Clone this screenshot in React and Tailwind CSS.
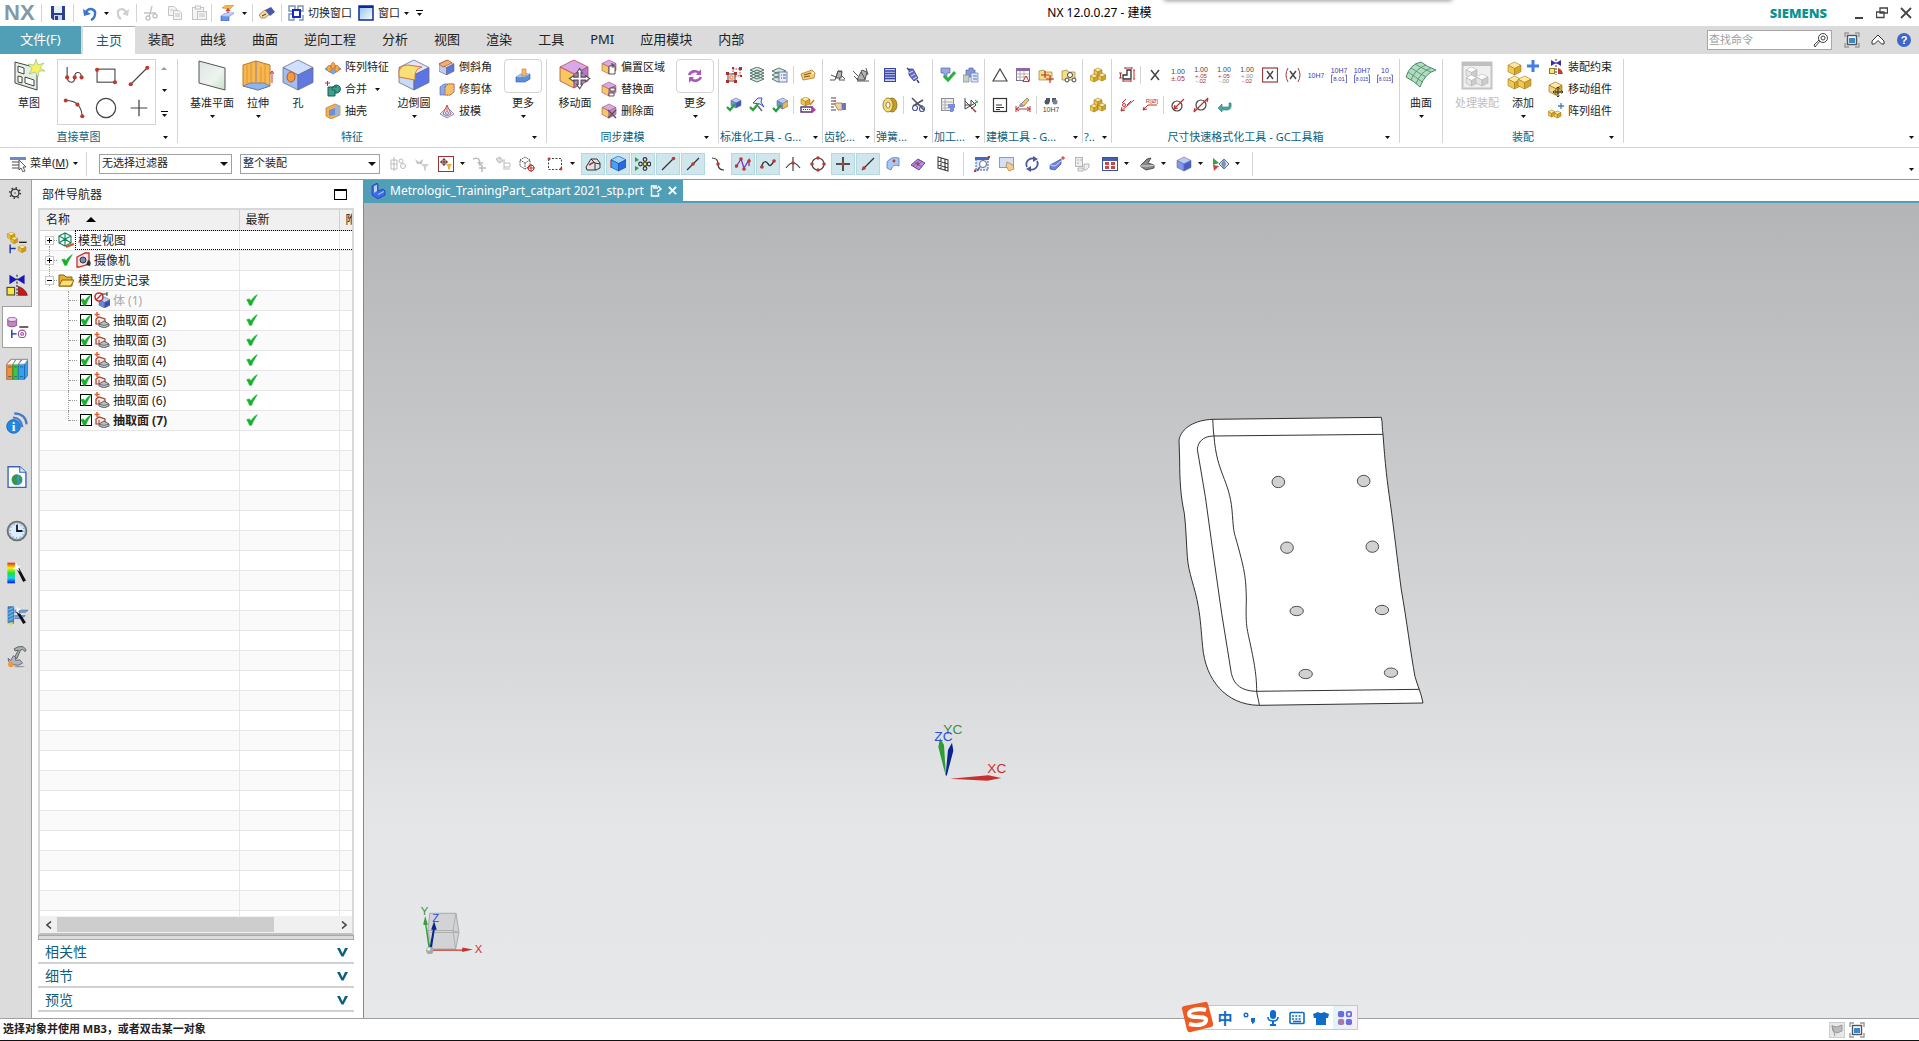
import React, { useState } from 'react';

// isometric cube, used by a lot of the icons
function Cube({ x = 0, y = 0, s = 16, top, left, right, line = '#6b6b8c' }) {
    const h = s / 2;
    const q = s / 4;
    return (
        <g stroke={line} strokeWidth={s > 20 ? 0.8 : 0.6} strokeLinejoin="round">
            <path d={`M${x + h} ${y}L${x + s} ${y + q}L${x + h} ${y + h}L${x} ${y + q}Z`} fill={top} />
            <path d={`M${x} ${y + q}L${x + h} ${y + h}V${y + s}L${x} ${y + s - q}Z`} fill={left} />
            <path d={`M${x + s} ${y + q}L${x + h} ${y + h}V${y + s}L${x + s} ${y + s - q}Z`} fill={right} />
        </g>
    );
}

function Dot({ x, y, r = 1.4 }) {
    return <circle cx={x} cy={y} r={r} fill="#c0392f" />;
}

function Tiny({ x = 8, y, fill = '#444', size = 6, children }) {
    return (
        <text x={x} y={y} fill={fill} fontSize={size} textAnchor="middle" fontFamily="Liberation Sans, sans-serif">
            {children}
        </text>
    );
}

const goldBlock = (
    <>
        <Cube x={4} y={1} s={8} top="#fbe9a4" left="#f0c74e" right="#d9a62c" line="#a37a1c" />
        <Cube x={0} y={7} s={8} top="#fbe9a4" left="#e8d44e" right="#d9a62c" line="#a37a1c" />
        <Cube x={8} y={6} s={8} top="#fbe9a4" left="#f0c74e" right="#d9a62c" line="#a37a1c" />
    </>
);

const tick = <path d="M1 8L5 7L7 10C9 6 12 3 16 1C13 6 10 10 8 16H5C4 13 3 11 1 8Z" fill="#12b32b" stroke="#12b32b" strokeWidth="0.8" />;

const violetCube = <Cube x={1} y={1} s={14} top="#d8a8e8" left="#f8c860" right="#c08ad8" line="#a0506c" />;

const cursorCross = <path d="M8 1L10 4H9V7H12V6L15 8L12 10V9H9V12H10L8 15L6 12H7V9H4V10L1 8L4 6V7H7V4H6Z" fill="#fff" stroke="#555" strokeWidth="0.8" />;

const folder = <path d="M1 4L6 3L7 5H14V13H1Z" fill="#f3dc8a" stroke="#a08430" strokeWidth="0.7" />;

// 16 x 16 drawings
const icons = {
    save: <><path d="M1 1H15V15H3L1 13Z" fill="#27408f" /><rect x="4" y="1" width="8" height="7" fill="#e6f0fa" /><rect x="4" y="10" width="8" height="5" fill="#cdd5e0" /><rect x="5" y="11" width="3" height="4" fill="#27408f" /></>,
    undo: <><path d="M4 7C7 2 14 4 13 9C13 12 11 14 9 15" fill="none" stroke="#3c78c8" strokeWidth="2.4" /><path d="M1 4L2 11L9 9Z" fill="#3c78c8" /></>,
    redo: <><path d="M12 7C9 2 3 4 4 9C4 12 5 13 7 14" fill="none" stroke="#cfcfcf" strokeWidth="2.2" /><path d="M15 4L14 11L8 9Z" fill="#cfcfcf" /></>,
    cut: <g fill="none" stroke="#c4c4c4" strokeWidth="1.4"><path d="M9 1L6 12M1 8L13 8" /><circle cx="5" cy="13" r="2" /><circle cx="12" cy="11" r="2" /></g>,
    copy: <g fill="#f4f4f4" stroke="#c4c4c4"><path d="M1.5 1.5H7L9.5 4V10.5H1.5Z" /><path d="M6.5 5.5H12L14.5 8V14.5H6.5Z" /><path d="M8 9H13M8 11H13M3 5H6" /></g>,
    paste: <g fill="#f4f4f4" stroke="#c4c4c4"><rect x="1.5" y="2.5" width="11" height="12" /><rect x="4.5" y="1" width="5" height="3" /><rect x="6.5" y="6.5" width="9" height="8" /><path d="M8 9H14M8 11H14" /></g>,
    touch: <><path d="M2 3L6 0H14L10 4Z" fill="#f8b848" stroke="#d48820" strokeWidth="0.6" /><path d="M8 3V9M6 6L8 4L10 6" stroke="#c44" fill="none" strokeWidth="1.2" /><path d="M1 11L6 8H14L9 11.5V16H1Z" fill="#6a94ec" stroke="#3858b0" strokeWidth="0.6" /><path d="M1 11L6 8H14L9 11.5Z" fill="#b8ccf8" /></>,
    handPen: <><path d="M0 10L6 5L11 9L6 13L2 13Z" fill="#f8d8a0" stroke="#8a6a30" strokeWidth="0.7" /><path d="M6 5L12 2L16 7L11 11Z" fill="#4858b0" /><path d="M3 11L7 9" stroke="#333" /></>,
    switchWin: <g fill="#fff" strokeWidth="1.4"><path d="M1 1H7V6H1ZM10 1H15V6H10ZM1 9H6V15H1Z" stroke="#7c93ad" /><path d="M11 15H15V10" stroke="#7c93ad" fill="none" /><rect x="5" y="5" width="7" height="7" stroke="#1628c8" strokeWidth="2" /></g>,
    win: <><defs><linearGradient id="winG" x1="0" y1="0" x2="1" y2="1"><stop offset="0" stopColor="#8cc0e8" /><stop offset="1" stopColor="#fff" /></linearGradient></defs><rect x="1" y="1" width="14" height="14" fill="url(#winG)" stroke="#10289c" strokeWidth="1.5" /><path d="M1 2H15" stroke="#10289c" strokeWidth="2" /></>,
    search: <g fill="none" stroke="#444"><circle cx="10" cy="6" r="4.5" /><circle cx="10" cy="6" r="2" /><path d="M7 9L2 15L1 13L6 8" /></g>,
    fit: <><path d="M1 5V1H5M11 1H15V5M15 11V15H11M5 15H1V11" fill="none" stroke="#999" strokeWidth="1.4" /><rect x="3.5" y="3.5" width="9" height="9" fill="#fff" stroke="#555" strokeWidth="1.4" /><rect x="5" y="6" width="6" height="5" fill="#3f86d0" /></>,
    up: <path d="M2 9L8 3L14 9V12H11.5L8 8.5L4.5 12H2Z" fill="#fff" stroke="#333" />,
    help: <><circle cx="8" cy="8" r="7" fill="#3c66c8" /><text x="8" y="12" fontSize="11" fontWeight="bold" fill="#fff" textAnchor="middle" fontFamily="Liberation Sans, sans-serif">?</text></>,

    pattern: <><path d="M0 10L8 5L16 10L8 15Z" fill="#7ca8e8" stroke="#4a68a8" strokeWidth="0.6" /><path d="M2 8L4 6L6 8V12L4 13L2 11ZM6 5L8 3L10 5V9L8 10L6 8ZM10 8L12 6L14 8V11L12 13L10 12Z" fill="#f8a848" stroke="#c06820" strokeWidth="0.6" /></>,
    unite: <><path d="M3 6H8A4 4 0 1 1 12 12H10V15H3Z" fill="#3aa08c" stroke="#1a5a50" /><path d="M7 9V6H12M10 12V9H7" fill="none" stroke="#1a5a50" strokeWidth="0.8" /><path d="M0 2H5M2.5 0V5" stroke="#c03030" /></>,
    shell: <><path d="M1 5L10 1L15 3V12L6 16L1 13Z" fill="#f4b050" stroke="#a06820" strokeWidth="0.6" /><path d="M4 7L10 5V12L4 13Z" fill="#6a90e0" /><path d="M10 5V1L15 3V12L10 12Z" fill="#90b4f0" opacity="0.8" /></>,
    chamfer: <><Cube x={0} y={1} s={15} top="#dfe9f8" left="#b8cdf0" right="#5a78d8" /><path d="M0 5L9 1L13 4L4 8Z" fill="#f8b060" stroke="#b03830" strokeWidth="0.6" /></>,
    trim: <><path d="M1 6L5 3H15V11L11 14H1Z" fill="#8aa8ec" stroke="#4a58a8" strokeWidth="0.6" /><path d="M6 6L9 3H15V11L11 14H6Z" fill="#f8c060" stroke="#b03830" strokeWidth="0.8" strokeDasharray="1.5 1" /></>,
    draft: <g fill="#e8e8f8" stroke="#6878b8" strokeWidth="0.8"><path d="M1 11L8 4L15 11L8 15Z" /><path d="M4 11L8 2L12 11L8 13ZM8 2V8" stroke="#c04040" /><circle cx="8" cy="10" r="1.5" /></g>,
    offset: <>{violetCube}<path d="M8 7H14V15H8Z" fill="#fff" stroke="#444" strokeWidth="0.9" /><path d="M10 5H12V9" fill="none" stroke="#444" /></>,
    replace: <>{violetCube}<path d="M9 7H14V10H9ZM8 12H13V15H8Z" fill="#fff" stroke="#444" strokeWidth="0.9" /></>,
    remove: <>{violetCube}<path d="M7 7L15 15M15 7L7 15" stroke="#555" strokeWidth="1.4" /></>,
    moreFeature: <><path d="M1 9L6 6H15V11L10 14H1Z" fill="#5a90e0" stroke="#3050a0" strokeWidth="0.6" /><path d="M1 9L6 6H15L10 9Z" fill="#a8c8f4" /><path d="M7 1H11V8H7Z" fill="#f8b868" stroke="#c07828" strokeWidth="0.6" /></>,
    moreSync: <g fill="none" stroke="#a858b8" strokeWidth="2.6"><path d="M2 7C4 3 9 2 12 5M14 9C12 13 7 14 4 11" /><path d="M14 1V7H9ZM2 15V9H7Z" fill="#a858b8" stroke="none" /></g>,

    stdBoxes: <><rect x="7" y="2" width="7" height="7" fill="#fff" stroke="#a83030" strokeDasharray="1.5 1" /><rect x="2" y="7" width="7" height="7" fill="#fff" stroke="#444" /><path d="M6 0H8V2H6ZM14 0H16V3H13V0ZM14 8H16V10H14ZM0 5H3V8H0ZM8 5H11V8H8ZM0 13H3V16H0ZM8 13H11V16H8Z" fill="#a83030" /><rect x="4" y="9" width="3" height="3" fill="none" stroke="#f07030" /></>,
    layers: <g fill="#d4e8dc" stroke="#4a6860" strokeWidth="0.9"><path d="M1 12L8 9L15 12L8 15ZM1 9L8 6L15 9L8 12ZM1 6L8 3L15 6L8 9ZM1 3L8 0L15 3L8 6Z" /></g>,
    layersDoc: <><g fill="#d4e8dc" stroke="#4a6860" strokeWidth="0.9"><path d="M0 12L6 9L12 12L6 15ZM0 8L6 5L12 8L6 11ZM0 4L7 1L14 4L7 7Z" /></g><rect x="7" y="5" width="8" height="10" fill="#e8eefc" stroke="#7080b8" /><path d="M9 8H10M11 8H14M9 11H10M11 11H14" stroke="#4858a8" /></>,
    tag: <><path d="M1 7L12 3L15 6L14 11L3 13Z" fill="#f8cc78" stroke="#a87828" strokeWidth="0.8" /><path d="M4 8L11 6M4 10L10 9" stroke="#7a5410" /><circle cx="13" cy="6" r="1" fill="#fff" /></>,
    blueCheck: <><Cube x={5} y={1} s={10} top="#b8d0f8" left="#6a94e8" right="#3858c0" /><path d="M1 10L4 13L9 7" fill="none" stroke="#28a040" strokeWidth="2.4" /></>,
    toolCheck: <><path d="M4 6L9 1H13L12 5L15 10L11 7Z" fill="#e8eefc" stroke="#4848c0" /><path d="M1 10L4 13L9 7" fill="none" stroke="#28a040" strokeWidth="2.4" /><path d="M9 9L13 14" stroke="#667" strokeWidth="1.5" /></>,
    goldCheck: <><Cube x={5} y={1} s={11} top="#b8d0f8" left="#6a94e8" right="#f0b840" /><path d="M1 11L4 14L9 8" fill="none" stroke="#28a040" strokeWidth="2.4" /></>,
    cubePen: <><Cube x={1} y={0} s={9} top="#fbe9a4" left="#f0c74e" right="#d9a62c" line="#a37a1c" /><path d="M1 10H12V15H1Z" fill="#fff" stroke="#503880" strokeWidth="1.4" /><path d="M3 12.5H10" stroke="#503880" strokeDasharray="1 1" /><path d="M12 9L16 13L12 16Z" fill="#b040a0" /><path d="M10 8L14 3" stroke="#d88020" strokeWidth="1.6" /></>,
    gear1: <g fill="#b0b4b8" stroke="#444" strokeWidth="0.9"><path d="M0 13H5L8 4H12L9 13H15" fill="none" /><path d="M6 11L8 4L12 5L11 11Z" /><path d="M1 8L6 10M11 8L15 12" /></g>,
    gear2: <g fill="#b0b4b8" stroke="#444" strokeWidth="0.9"><path d="M4 13L9 3L14 5L12 13Z" /><path d="M0 4L5 9M1 9L5 13M8 5L12 12M13 1L15 8M4 14H16" /></g>,
    gearHand: <><path d="M1 1H6M1 4H4M1 7H5M1 10H4M1 13H6" stroke="#444" strokeWidth="1.2" /><path d="M4 4L6 4" stroke="#c03030" strokeWidth="1.5" /><path d="M5 6H12V13H8L5 8Z" fill="#f4cfa4" stroke="#90683c" strokeWidth="0.7" /><rect x="12" y="6" width="4" height="7" fill="#6878c0" /></>,
    spring: <g fill="#c8d0f4" stroke="#3844a0"><rect x="2.5" y="1.5" width="11" height="13" /><path d="M2 4H14M2 6.5H14M2 9H14M2 11.5H14" strokeWidth="1.4" /></g>,
    spring2: <><path d="M4 2L8 2L13 11L9 14L4 8Z" fill="#6470c8" stroke="#303c90" strokeWidth="0.8" /><path d="M4 6L8 4M6 9L10 7M8 12L12 10" stroke="#dde" /><path d="M2 1L4 3M12 13L14 16" stroke="#303c90" strokeWidth="1.5" /></>,
    disc: <><ellipse cx="10" cy="8" rx="5" ry="7" fill="#c89c28" stroke="#7a5c10" strokeWidth="0.7" /><ellipse cx="6" cy="8" rx="5" ry="7" fill="#f4dc78" stroke="#7a5c10" strokeWidth="0.7" /><ellipse cx="6" cy="8" rx="2" ry="3" fill="#fff" stroke="#7a5c10" strokeWidth="0.7" /></>,
    springCut: <g fill="none" stroke="#4c5c98" strokeWidth="1.2"><path d="M2 1L14 13M13 3L3 9" stroke="#555" strokeWidth="1.6" /><circle cx="5" cy="11" r="2.5" /><circle cx="12" cy="12" r="2.5" /><path d="M6 7L13 9" /></g>,
    machCheck: <><path d="M1 1H10V6H7V10H4V6H1Z" fill="#98a8e0" stroke="#5464a8" strokeWidth="0.7" /><path d="M4 9L8 13L15 5" fill="none" stroke="#28b040" strokeWidth="3" /></>,
    machDoc: <><path d="M3 3H6V1H10V3H12V10H3Z" fill="#8898d8" stroke="#5464a8" strokeWidth="0.7" /><path d="M0 8H6V15H0Z" fill="#c8d0c8" stroke="#788" strokeWidth="0.7" /><path d="M8 6H15V15H8Z" fill="#dce4fc" stroke="#6878b8" strokeWidth="0.7" /><path d="M10 9H14M10 12H14" stroke="#6878b8" /></>,
    machTable: <><rect x="1.5" y="1.5" width="12" height="12" fill="#f4f4dc" stroke="#889" /><path d="M1 5H14M1 8H14M1 11H14M5 1V14" stroke="#aab" /><path d="M8 7H15V11H13V15H10V11H8Z" fill="#7c8cd8" /></>,
    axes: <g fill="none" stroke="#444"><path d="M2 1V12L14 5M2 4L11 13M2 8H8V3L13 8L8 12" /><path d="M12 3L15 5L12 6" stroke="#28a040" /><path d="M10 12L13 15" stroke="#c03030" strokeWidth="1.5" /></g>,
    triangle: <path d="M8 2L15 14H1Z" fill="none" stroke="#444" strokeWidth="1.2" />,
    table: <><rect x="1.5" y="1.5" width="13" height="12" fill="#fff" stroke="#846c98" /><rect x="1" y="1" width="14" height="3" fill="#8c68a8" /><path d="M1 7H14M1 10H14M5 4V14M9 4V14" stroke="#998" strokeWidth="0.7" /><path d="M11 9L14 14.5H8Z" fill="#fff" stroke="#c03030" /></>,
    folderPlus: <>{folder}<path d="M7 4V11M3 8H11M12 8V16M8 12H16" stroke="#c03030" strokeWidth="1.2" /></>,
    folderGear: <>{folder}<g fill="#fff" stroke="#444"><circle cx="9" cy="8" r="2.5" /><circle cx="6" cy="13" r="2" /><circle cx="13" cy="13" r="2" /></g></>,
    note: <><rect x="1.5" y="1.5" width="13" height="13" fill="#fff" stroke="#333" strokeWidth="1.2" /><path d="M4 8H10M4 10.5H12M4 12.5H8" stroke="#333" /></>,
    brushDim: <><path d="M6 7L12 1L14 3L9 9Z" fill="#f4c858" stroke="#667" strokeWidth="0.7" /><path d="M5 6L9 10L4 10Z" fill="#8898b8" /><path d="M1 9V15M15 9V15M1 12H15M4 10L1 12L4 14M12 10L15 12L12 14" fill="none" stroke="#c03030" /></>,
    binoc: <><path d="M3 1H7V5H3ZM9 1H13V5H9Z" fill="#505868" /><circle cx="4" cy="5" r="2.5" fill="#505868" /><circle cx="12" cy="5" r="2.5" fill="#788098" /><Tiny y={15} size={7}>10H7</Tiny></>,
    blocks: goldBlock,
    dimBox: <><path d="M8 3H12V12H4V8H8Z" fill="none" stroke="#333" strokeWidth="1.3" /><path d="M0 6H3M0 11H3M1.5 6V11M6 0V2M13 0V2M6 1H13M4 14H12M4 13V15M12 13V15M15 3V12M14 3H16M14 12H16" stroke="#c03030" /></>,
    x: <path d="M4 3L12 13M12 3L4 13" stroke="#444" strokeWidth="1.5" />,
    tolA: <><Tiny y={7} size={7}>1.00</Tiny><Tiny y={14} fill="#b03030" size={7}>±.05</Tiny></>,
    tolB: <><Tiny y={5} size={7}>1.00</Tiny><Tiny y={11} fill="#b03030">+.05</Tiny><Tiny y={16} fill="#b03030">-.02</Tiny></>,
    tolC: <><Tiny y={5} size={7}>1.00</Tiny><Tiny y={11} fill="#b03030">+.05</Tiny><Tiny y={16} fill="#888">-.00</Tiny></>,
    tolD: <><Tiny y={5} size={7}>1.00</Tiny><Tiny y={11} fill="#888">+.00</Tiny><Tiny y={16} fill="#b03030">-.02</Tiny></>,
    boxX: <><rect x="0.5" y="1" width="15" height="14" fill="none" stroke="#a03838" strokeWidth="1.2" /><path d="M5 4L11 12M11 4L5 12" stroke="#444" strokeWidth="1.4" /></>,
    parX: <><path d="M3 1Q-1 8 3 15M13 1Q17 8 13 15" fill="none" stroke="#a03838" /><path d="M5 4L11 12M11 4L5 12" stroke="#444" strokeWidth="1.4" /></>,
    h7: <Tiny y={11} fill="#3838b0" size={7}>10H7</Tiny>,
    h7a: <><Tiny y={6} fill="#3838b0" size={7}>10H7</Tiny><path d="M2 8H0.500V16H2M14 8H15.500V16H14" fill="none" stroke="#3838b0" strokeWidth="0.7" /><Tiny y={14} fill="#3838b0">8.01</Tiny></>,
    h7b: <><Tiny y={6} fill="#3838b0" size={7}>10H7</Tiny><path d="M2 8H0.500V16H2M14 8H15.500V16H14" fill="none" stroke="#3838b0" strokeWidth="0.7" /><Tiny y={14} fill="#3838b0" size={5}>8.015</Tiny></>,
    h7c: <><Tiny y={6} fill="#3838b0" size={7}>10</Tiny><path d="M2 8H0.500V16H2M14 8H15.500V16H14" fill="none" stroke="#3838b0" strokeWidth="0.7" /><Tiny y={14} fill="#3838b0" size={5}>8.015</Tiny></>,
    leader: <><path d="M2 14L15 3M2 14L3 10M2 14L6 13M3 6L7 2M8 8L12 4" stroke="#c03030" fill="none" /><circle cx="5" cy="8" r="1.5" fill="none" stroke="#c03030" /></>,
    leaderR: <><path d="M1 13L6 8H15M1 13L2 10M1 13L5 12" stroke="#c03030" fill="none" /><Tiny x={10} y={6} fill="#c03030">R[Ø]</Tiny></>,
    dia1: <><circle cx="7" cy="9" r="5" fill="none" stroke="#444" strokeWidth="1.2" /><path d="M4 12L14 2M4 12L5 8M4 12L8 11" stroke="#c03030" strokeWidth="1.2" fill="none" /></>,
    dia2: <><circle cx="8" cy="8" r="5" fill="none" stroke="#444" strokeWidth="1.2" /><path d="M1 15L15 1M1 15L2 11M15 1L14 5" stroke="#c03030" strokeWidth="1.2" fill="none" /></>,
    enter: <path d="M13 6V10H6V7L2 11L6 15V13H12Q16 12 15 6Z" fill="#48a8a8" stroke="#287878" strokeWidth="0.6" />,
    constraint: <><path d="M3 1V7L8 4ZM13 1V7L8 4Z" fill="#3830a8" /><path d="M8 0V16" stroke="#333" strokeDasharray="2 1" /><rect x="1.5" y="9.5" width="5" height="5" fill="#f8e870" stroke="#8a7a20" /><path d="M10 9V15H15Q14 10 10 9Z" fill="#c83838" /></>,
    moveComp: <><Cube x={1} y={1} s={13} top="#fbe9a4" left="#f4d478" right="#d9a62c" line="#8a661c" /><path d="M10 6V16M5 11H15M8.5 7.5L10 6L11.5 7.5M8.5 14.5L10 16L11.5 14.5M6.5 9.5L5 11L6.5 12.5M13.5 9.5L15 11L13.5 12.5" fill="none" stroke="#333" /></>,
    patternComp: <><Cube x={0} y={7} s={7} top="#fbe9a4" left="#f4c04e" right="#d9a62c" line="#a37a1c" /><Cube x={6} y={8} s={7} top="#fbe9a4" left="#f4c04e" right="#d9a62c" line="#a37a1c" /><path d="M13 0V6M10 3H16" stroke="#4878d0" strokeWidth="1.3" /></>,

    menu: <><path d="M0 1H16V4H0Z" fill="#6c88c8" /><path d="M2 6H10M2 9H9M2 12H10" stroke="#888" strokeWidth="1.4" /><path d="M9 4V14L11 12L13 16L15 15L13 11H16Z" fill="#fff" stroke="#333" strokeWidth="0.8" /></>,
    grayMove: <g fill="none" stroke="#bbb"><path d="M1 4H7V13H1ZM4 1V15M1 8H7" /><circle cx="11" cy="5" r="2" /><circle cx="13" cy="10" r="2.5" /></g>,
    grayFilter: <><path d="M1 3L5 6L9 3L8 8H3Z" fill="#c4c4c4" /><path d="M7 8H15L12 11V15L10 14V11Z" fill="#d0d0d0" /></>,
    snapBox: <><rect x="0.5" y="0.5" width="15" height="15" fill="#fff" stroke="#a03038" /><circle cx="6" cy="6" r="2.5" fill="none" stroke="#a03038" /><path d="M6 2V10M2 6H10" stroke="#333" /><path d="M8 8H14L12 11V14L10 13V11Z" fill="#f0b038" /></>,
    grayA: <g fill="none" stroke="#bbb" strokeWidth="1.5"><path d="M2 3Q9 0 9 8M7 6L9 9L12 6" /><path d="M11 9V16M8 12H15" /></g>,
    grayB: <g fill="#ddd" stroke="#bbb"><path d="M1 3L5 1L8 5L4 7Z" /><path d="M9 3V14M9 7H15V11H9M10 13H15" fill="none" /></g>,
    cubeTarget: <><path d="M1 4L6 1L11 4V10L6 13L1 10ZM1 4L6 7L11 4M6 7V13" fill="none" stroke="#444" strokeDasharray="1.5 1" /><circle cx="12" cy="12" r="3" fill="none" stroke="#c03030" /><path d="M12 8V16M8 12H16" stroke="#c03030" /></>,
    marquee: <><rect x="1.5" y="2.5" width="13" height="11" fill="none" stroke="#444" strokeDasharray="2 1.5" /><Dot x={2} y={3} /><Dot x={14} y={13} /></>,
    hlShape: <><path d="M1 11L6 3H12L15 7V12L11 14L2 14Z" fill="#dde3ea" stroke="#333" /><path d="M6 3L10 7V14M10 7L15 8" fill="none" stroke="#333" /><path d="M4 9L9 6" stroke="#c03030" strokeWidth="1.5" /></>,
    hlCube: <><Cube x={1} y={0} s={15} top="#9cd4fc" left="#48a0f4" right="#2868e0" line="#1848a0" /><path d="M1 4V12" stroke="#c04040" /></>,
    hlGear: <><path d="M0 1L4 4L0 6ZM0 10L4 12L0 15Z" fill="#28a040" /><circle cx="10" cy="8" r="2" fill="#f4e030" stroke="#333" /><g fill="none" stroke="#333" strokeWidth="1.2"><circle cx="10" cy="3.500" r="1.8" /><circle cx="10" cy="12.500" r="1.8" /><circle cx="5.500" cy="8" r="1.8" /><circle cx="14" cy="8" r="1.8" /></g></>,
    endpoint: <><path d="M2 14L14 2" stroke="#333" strokeWidth="1.2" /><Dot x={13.5} y={2.5} r={1.8} /></>,
    midpoint: <><path d="M2 14L14 2" stroke="#333" strokeWidth="1.2" /><Dot x={8} y={8} r={1.8} /></>,
    ctrl: <><path d="M2 2Q8 2 8 8Q8 14 14 14" fill="none" stroke="#333" strokeWidth="1.2" /><Dot x={8} y={8} r={1.8} /></>,
    poles: <><path d="M1 11L6 3L9 12L14 4V10" fill="none" stroke="#7838b8" strokeWidth="1.3" /><Dot x={1.5} y={10} r={1.8} /><Dot x={6} y={3} r={1.8} /><Dot x={9} y={13} r={1.8} /><Dot x={14} y={5} r={1.8} /></>,
    spline: <><path d="M1 12C4 2 7 6 9 9C11 11 13 6 15 4" fill="none" stroke="#333" strokeWidth="1.4" /><Dot x={2} y={11} r={1.8} /><Dot x={14} y={5} r={1.8} /></>,
    cross: <><path d="M8 1V15M1 12Q8 2 15 12" fill="none" stroke="#444" strokeWidth="1.2" /><Dot x={8} y={7} r={1.8} /></>,
    center: <><circle cx="8" cy="8" r="6" fill="none" stroke="#444" strokeWidth="1.2" /><Dot x={8} y={2} r={1.8} /><Dot x={8} y={14} r={1.8} /><Dot x={2} y={8} r={1.8} /><Dot x={14} y={8} r={1.8} /></>,
    point: <><path d="M8 1V15M1 8H15" stroke="#222" strokeWidth="1.5" /><Dot x={8} y={8} r={1.8} /></>,
    onCurve: <><path d="M2 14L14 2" stroke="#333" strokeWidth="1.2" /><Dot x={4} y={12} r={1.8} /></>,
    face: <><path d="M2 6Q6 0 14 2V10Q8 7 6 14L2 12Z" fill="#a8c8f4" stroke="#5878b8" strokeWidth="0.8" /><Dot x={9} y={5} /></>,
    mesh: <><path d="M1 9L8 3L15 7L9 14Z" fill="#b090e0" stroke="#6a4898" /><path d="M4 6L12 11M5 12L12 5M3 10L10 4" stroke="#6a4898" strokeWidth="0.7" /><Dot x={8} y={8} /></>,
    grid: <g fill="none" stroke="#444" strokeWidth="1.1"><path d="M3 1L13 4V15L3 12ZM3 5L13 8M3 9L13 12M6 2V13M10 3V14" /></g>,
    zoomFit: <><rect x="2" y="2" width="12" height="12" fill="#dde8fa" stroke="#3858b8" strokeDasharray="2 1" /><path d="M1 1H15V4H1Z" fill="#4868c0" /><circle cx="9" cy="8" r="3.5" fill="#fff" stroke="#667" /><path d="M6 11L3 15" stroke="#667" strokeWidth="1.6" /><Dot x={15} y={1} /><Dot x={1} y={15} /></>,
    pan: <><rect x="0.5" y="1.5" width="14" height="10" fill="#d4e0f4" stroke="#8c9cc0" /><path d="M8 6L14 9L15 13L10 15L7 10Z" fill="#f4cc90" stroke="#a88040" strokeWidth="0.7" /></>,
    rotate: <g fill="none" stroke="#485c98" strokeWidth="1.8"><path d="M3 11A6 6 0 0 1 11 3M13 5A6 6 0 0 1 5 13" /><path d="M9 0L14 3L9 6ZM7 10V16L2 13Z" fill="#485c98" stroke="none" /></g>,
    persp: <><path d="M1 9L5 7L12 3V8L6 14L1 13Z" fill="#6c84d8" stroke="#3c50a0" strokeWidth="0.7" /><path d="M1 9L6 10L12 5" fill="none" stroke="#c8d4f8" /><path d="M14 0V4M12 2H16" stroke="#c03030" /></>,
    grayDoc: <g fill="#eee" stroke="#b4b4b4"><rect x="1.5" y="1.5" width="7" height="9" /><path d="M3 4H5M3 7H5M6 4H8" /><path d="M4 12H9V15H4ZM10 8H15V11L12 14H10Z" /></g>,
    layout: <><rect x="0.5" y="1.5" width="15" height="13" fill="#fff" stroke="#3850a8" /><path d="M1 2H15V5H1Z" fill="#4060b8" /><path d="M3 6H7V9H3ZM9 6H13V9H9ZM3 10H7V13H3ZM9 10H13V13H9Z" fill="#c84848" /></>,
    shade: <><path d="M1 10L8 3L12 2L9 7L15 9V12L7 14Z" fill="#888" stroke="#444" strokeWidth="0.9" /><path d="M1 10L10 10L15 9" fill="none" stroke="#ddd" /></>,
    blueCube: <Cube x={1} y={1} s={14} top="#b8ccf8" left="#7c98ec" right="#4460c8" />,
    clip: <><path d="M0 2L6 7L0 9Z" fill="#38a048" /><path d="M0 9L6 10L1 15Z" fill="#d04040" /><path d="M6 8L11 3L16 8L11 13Z" fill="#dde6f0" stroke="#667" /><path d="M11 3L13 8L11 13L8 8Z" fill="#7890c0" /></>,

    views: <><path d="M1 4L7 1L13 4V11L7 14L1 11ZM1 4L7 7L13 4M7 1V14M1 11L7 7L13 11" fill="none" stroke="#18885c" strokeWidth="1.2" /><path d="M8 15L16 12" stroke="#e05028" strokeWidth="2" /></>,
    camera: <><path d="M1 5L9 1H13V12L3 15H1Z" fill="#fce4e0" stroke="#c03030" strokeWidth="1.3" /><circle cx="7" cy="8" r="3" fill="#7888c8" stroke="#333" /><path d="M12 8Q16 9 14 14L10 13Z" fill="#333" /></>,
    openFolder: <><path d="M1 3H6L8 5H14V14H1Z" fill="#e8b030" stroke="#8a6008" /><path d="M4 8H16L13 14H1Z" fill="#fce070" stroke="#8a6008" /></>,
    body: <><Cube x={5} y={5} s={11} top="#b8ccf8" left="#5c88e8" right="#3050c0" /><circle cx="5" cy="5" r="4" fill="#fff" stroke="#c83030" strokeWidth="1.6" /><path d="M2 8L8 2" stroke="#c83030" strokeWidth="1.4" /><path d="M8 2H13M13 0V4" stroke="#333" /></>,
    extract: <><path d="M3 0V5M0.500 2.500H5.500" stroke="#e06030" fill="none" strokeWidth="1.4" /><path d="M2 7L5 5L11 7V12H2Z" fill="#fbe6e0" stroke="#a04030" strokeWidth="1.2" /><path d="M5 8V12" stroke="#a04030" /><path d="M5 12L10 9L15 12V14L10 16L5 14Z" fill="#b8c0c8" stroke="#555" strokeWidth="0.9" /><path d="M5 12L10 13.500L15 12" fill="none" stroke="#555" strokeWidth="0.7" /></>,
    flag: <g><rect x="0.5" y="0.5" width="15" height="15" fill="#e8e8e8" stroke="#ccc" /><path d="M3 4L8 5L13 3V9L8 11L4 9ZM3 3L6 14" fill="#bbb" stroke="#999" /></g>,
    part: <><path d="M2 3L7 0L8 2V8L13 6L15 8V12L8 16L2 12Z" fill="#3a6cf0" stroke="#1838a0" strokeWidth="0.7" /><path d="M4 3L7 2V8L4 10Z" fill="#b8d4fc" /><path d="M8 11L14 8V9L8 12Z" fill="#b8d4fc" /></>,
};

// 32 x 32 drawings
const bigIcons = {
    sketch: <><path d="M2 3L24 9V31L2 24Z" fill="#e4f0e4" stroke="#444" /><path d="M5 7L11 9V15L5 13ZM5 17L9 18V24L5 23ZM12 18L21 21V27L12 24Z" fill="#fff" stroke="#444" /><path d="M23 0L25 6L31 4L27 9L32 12L26 12L25 18L22 13L16 15L19 10L15 5L21 6Z" fill="#f8f060" stroke="#7cb8a0" strokeWidth="0.6" /></>,
    datum: <path d="M3 2L29 9V31L3 24Z" fill="url(#datumG)" stroke="#555" />,
    extrude: <><path d="M1 6L14 2L28 6V27L16 31L1 27Z" fill="#f8b850" stroke="#c07828" /><path d="M5 6V26M9 4V24M19 8V27M23 5V26" stroke="#e09430" /><path d="M14 2V23M1 27L8 24H22L28 27L16 31Z" fill="#8cb4f0" stroke="#5870b0" strokeWidth="0.7" /><path d="M30 24V12M28 15L30 12L32 15" fill="none" stroke="#c83030" /></>,
    hole: <><Cube x={1} y={1} s={30} top="#cfe0fa" left="#a4bcf4" right="#6078e0" /><ellipse cx="9" cy="18" rx="4" ry="5" fill="#f89838" stroke="#b05818" /></>,
    blend: <><Cube x={1} y={1} s={30} top="#dce8fc" left="#c8dcf8" right="#5c74e4" /><path d="M1 18V12Q3 6 10 6L24 8Q17 10 17 17V21Z" fill="#f8e078" stroke="#e07030" /></>,
    moveFace: <><Cube x={1} y={1} s={28} top="#d8a8e8" left="#f8c85c" right="#b478d0" line="#b04858" /><g transform="translate(9 8) scale(1.45)">{cursorCross}</g></>,
    surface: <><path d="M1 18Q5 5 16 3Q22 8 31 11Q20 14 15 28Q9 22 1 18Z" fill="#b0dcc0" stroke="#4c8868" /><path d="M6 9Q14 14 21 18M10 5Q18 10 26 13M3 13Q11 18 17 23M6 21Q10 10 21 6M11 25Q15 13 26 9" fill="none" stroke="#4c8868" strokeWidth="0.8" /></>,
    process: <><rect x="1.5" y="3.5" width="29" height="26" fill="#f0f0f0" stroke="#c4c4c4" strokeWidth="2" /><path d="M1 3H31V7H1Z" fill="#c0c0c0" /><Cube x={5} y={8} s={11} top="#fff" left="#e4e4e4" right="#ccc" line="#b4b4b4" /><Cube x={5} y={16} s={11} top="#fff" left="#e4e4e4" right="#ccc" line="#b4b4b4" /><Cube x={15} y={15} s={12} top="#fff" left="#e4e4e4" right="#ccc" line="#b4b4b4" /></>,
    add: <><Cube x={1} y={3} s={13} top="#fbe9a4" left="#f4c850" right="#d9a62c" line="#a37a1c" /><Cube x={1} y={17} s={13} top="#fbe9a4" left="#f4c850" right="#d9a62c" line="#a37a1c" /><Cube x={11} y={17} s={13} top="#fbe9a4" left="#f4c850" right="#d9a62c" line="#a37a1c" /><path d="M26 1V13M20 7H32" stroke="#4080e0" strokeWidth="3" /></>,

    // gallery
    profile: <><path d="M6 3V16Q6 25 12 25Q17 25 17 18Q17 11 22 11Q27 11 27 20" fill="none" stroke="#444" strokeWidth="1.6" /><Dot x={6} y={18} r={3} /><Dot x={17} y={18} r={3} /><Dot x={27} y={18} r={3} /></>,
    rect: <><rect x="3" y="6" width="26" height="19" fill="none" stroke="#444" strokeWidth="1.6" /><Dot x={3} y={7} r={3} /><Dot x={29} y={25} r={3} /></>,
    line: <><path d="M4 28L28 4" stroke="#444" strokeWidth="1.6" /><Dot x={4} y={28} r={3} /><Dot x={28} y={4} r={3} /></>,
    arc: <><path d="M5 5Q26 5 28 28" fill="none" stroke="#444" strokeWidth="1.6" /><Dot x={4} y={5} r={3} /><Dot x={21} y={11} r={3} /><Dot x={28} y={28} r={3} /></>,
    circle: <circle cx="16" cy="16" r="14" fill="none" stroke="#444" strokeWidth="1.8" />,
    plus: <path d="M16 4V28M4 16H28" stroke="#444" strokeWidth="1.8" />,

    // resource bar
    gear: <g fill="none" stroke="#333"><circle cx="16" cy="16" r="9" strokeWidth="3" /><circle cx="16" cy="16" r="12" strokeWidth="4" strokeDasharray="3 6.4" /><circle cx="16" cy="16" r="1" fill="#333" /></g>,
    assembly: <><Cube x={2} y={0} s={11} top="#fce888" left="#f0c020" right="#d89c10" line="#a07810" /><Cube x={7} y={7} s={10} top="#fce888" left="#f0c020" right="#d89c10" line="#a07810" /><Cube x={18} y={19} s={11} top="#fce888" left="#f0c020" right="#d89c10" line="#a07810" /><path d="M19 15H30" stroke="#222" strokeWidth="2" /><path d="M6 18V31M6 24H14" fill="none" stroke="#1830a0" strokeWidth="2" /></>,
    constraints: <><path d="M5 1V15L16 8ZM27 1V15L16 8Z" fill="#1818b8" /><path d="M16 1V32" stroke="#222" strokeWidth="1.6" strokeDasharray="3 2" /><rect x="1.5" y="19.5" width="11" height="11" fill="#f8e838" stroke="#444" strokeWidth="1.6" /><path d="M18 18V31H31Q29 22 18 18Z" fill="#c81818" stroke="#601010" /></>,
    navigator: <><path d="M1 5V14Q7 18 14 14V5Z" fill="#c088c0" stroke="#783878" /><ellipse cx="7.5" cy="5" rx="6.5" ry="3" fill="#f0d0f0" stroke="#783878" /><path d="M18 16H31" stroke="#222" strokeWidth="2" /><path d="M7 20V32M7 26H14" fill="none" stroke="#1830a0" strokeWidth="2" /><circle cx="22" cy="26" r="5.5" fill="#fff" stroke="#a048a0" strokeWidth="1.6" /><circle cx="22" cy="26" r="2" fill="none" stroke="#a048a0" strokeWidth="1.6" /></>,
    books: <><path d="M1 9L7 2H13L10 9V31H1Z" fill="#f09030" stroke="#905010" /><path d="M10 9L14 2H21L18 9V31H10Z" fill="#38c848" stroke="#187828" /><path d="M18 9L23 2H32V25L27 31H18Z" fill="#38a0f0" stroke="#1868a8" /><path d="M1 9L8 2H14L10 9M10 9L15 2H22L18 9M18 9L24 2H32L27 9Z" fill="#fff" stroke="#888" /><path d="M27 9V31M3 13H8M3 27H8M12 13H16M12 27H16M20 13H25M20 27H25" stroke="#1a508c" /></>,
    info: <><g fill="none" stroke="#4878c8" strokeWidth="3"><path d="M10 8Q22 8 24 22M12 2Q29 3 30 18" /></g><circle cx="11" cy="21" r="10" fill="#2088e0" stroke="#1050a0" /><text x="11" y="28" fontSize="19" fontWeight="bold" fill="#fff" textAnchor="middle" fontFamily="Liberation Serif, serif">i</text></>,
    globeDoc: <><path d="M3 1H20L29 9V31H3Z" fill="#fff" stroke="#3868b0" strokeWidth="2" /><path d="M20 1V9H29" fill="#dce8f8" stroke="#3868b0" strokeWidth="1.6" /><circle cx="16" cy="20" r="8" fill="#3898c8" /><path d="M9 17Q12 11 17 13L15 19L18 23L14 28Q8 25 9 17ZM20 14Q25 18 22 25L19 20Z" fill="#389838" /></>,
    clock: <><circle cx="16" cy="16" r="15" fill="#687078" /><circle cx="16" cy="16" r="12" fill="#dcecfc" stroke="#aab4c0" /><path d="M16 7V16H24" fill="none" stroke="#101828" strokeWidth="2.6" /><circle cx="16" cy="16" r="10" fill="none" stroke="#334" strokeWidth="1.4" strokeDasharray="1 4.24" /></>,
    rainbow: <><rect x="2" y="1" width="11" height="30" fill="url(#rainbowG)" /><path d="M15 9L18 7L29 27L25 29Z" fill="#111" /><path d="M15 1L17 6L22 5L18 9L20 14L15 10L10 11L13 7Z" fill="#fff" /></>,
    wand: <><path d="M3 4H11V28H3Z" fill="#3c8cd0" stroke="#205c98" /><path d="M3 9L11 5M3 14L11 10M3 19L11 15M3 24L11 20" stroke="#a8d4f8" /><path d="M12 9H32L28 12H12M12 17H28L22 21H12" fill="#7cacdc" stroke="#3468a8" /><path d="M15 12L18 10L29 27L25 29Z" fill="#111" /><path d="M16 2L17 7L22 7L18 10L20 15L15 11Z" fill="#fff" /><path d="M1 28L11 26L8 31Z" fill="#e8d848" /></>,
    hammer: <><path d="M12 4L18 1H25L29 5L28 8L24 5L21 6L16 18L12 17L18 6L13 7Z" fill="#a8b4ac" stroke="#333" /><path d="M3 18L7 21L11 14L14 17L14 21L20 20L24 25L18 28L8 27L4 23Z" fill="#b0b4c4" stroke="#445" /><circle cx="7" cy="27" r="4" fill="#f09838" /><path d="M12 29H28L24 31H14Z" fill="#999" /></>,
};

function Icon({ name }) {
    return <svg viewBox="0 0 16 16" className="size-4 shrink-0" aria-hidden="true">{icons[name]}</svg>;
}

function BigIcon({ name, className = 'size-8' }) {
    return <svg viewBox="0 0 32 32" className={`shrink-0 ${className}`} aria-hidden="true">{bigIcons[name]}</svg>;
}

function Caret({ className = 'w-[5px] h-[3px]' }) {
    return (
        <svg viewBox="0 0 6 3" preserveAspectRatio="none" className={`shrink-0 ${className}`} aria-hidden="true">
            <path d="M0 0H6L3 3Z" fill="#111" />
        </svg>
    );
}

function CaretButton({ label = '更多选项', className = 'w-4 h-4' }) {
    return (
        <button type="button" aria-label={label} className={`flex shrink-0 items-center justify-center ${className}`}>
            <Caret />
        </button>
    );
}

function Sep({ className = 'h-[18px]' }) {
    return <div className={`w-px shrink-0 bg-[#d4d4d4] ${className}`} />;
}

function TitleBar() {
    const btn = 'flex h-6 w-6 shrink-0 items-center justify-center';
    return (
        <header className="relative flex h-[26px] shrink-0 items-center bg-white text-[11px] text-[#222]">
            <span className="w-[41px] pl-1 font-['Liberation_Sans',sans-serif] text-[22px] leading-6 font-bold text-[#8299a8]">NX</span>
            <Sep />
            <button type="button" aria-label="保存" className="flex h-6 w-[31px] items-center justify-center"><Icon name="save" /></button>
            <Sep />
            <button type="button" aria-label="撤销" className="flex h-6 w-6 items-center justify-end"><Icon name="undo" /></button>
            <CaretButton />
            <button type="button" aria-label="重做" className="flex h-6 w-[22px] items-center justify-start"><Icon name="redo" /></button>
            <Sep />
            <div className="w-0.5" />
            <button type="button" aria-label="剪切" className={btn}><Icon name="cut" /></button>
            <button type="button" aria-label="复制" className={btn}><Icon name="copy" /></button>
            <button type="button" aria-label="粘贴" className={btn}><Icon name="paste" /></button>
            <Sep />
            <button type="button" aria-label="触控" className="flex h-6 w-6 items-center justify-end"><Icon name="touch" /></button>
            <CaretButton />
            <Sep />
            <button type="button" aria-label="重复命令" className="flex h-6 w-7 items-center justify-center"><Icon name="handPen" /></button>
            <Sep />
            <button type="button" className="flex h-6 items-center gap-1 pl-1.5"><Icon name="switchWin" />切换窗口</button>
            <button type="button" className="flex h-6 items-center gap-1 pl-1.5"><Icon name="win" />窗口<Caret /></button>
            <button type="button" aria-label="自定义" className="flex h-6 w-5 flex-col items-center justify-center gap-0.5">
                <span className="h-px w-[7px] bg-black" />
                <Caret />
            </button>
            <h1 className="flex-1 text-center text-[12px] text-black">NX 12.0.0.27 - 建模</h1>
            <div className="absolute -top-2 left-[1165px] h-2 w-[286px] bg-white shadow-[0_0_4px_1px_#999]" />
            <span className="pr-5 font-['Open_Sans',sans-serif] text-[13px] leading-6 font-extrabold text-[#0a9393]">SIEMENS</span>
            <button type="button" aria-label="最小化" className="flex h-5 w-[23px] items-end justify-center pb-1"><span className="h-0.5 w-2 bg-[#444]" /></button>
            <button type="button" aria-label="还原" className="flex h-6 w-6 items-center justify-center">
                <svg viewBox="0 0 12 12" className="size-3" fill="#fff" stroke="#444"><path d="M4 1H11.5V6H4ZM0.5 5H8V10.5H0.5Z" strokeWidth="1.3" /></svg>
            </button>
            <button type="button" aria-label="关闭" className="mr-px flex h-6 w-6 items-center justify-center">
                <svg viewBox="0 0 12 12" className="size-3" stroke="#444" strokeWidth="1.8"><path d="M1 1L11 11M11 1L1 11" /></svg>
            </button>
        </header>
    );
}

const tabs = ['主页', '装配', '曲线', '曲面', '逆向工程', '分析', '视图', '渲染', '工具', 'PMI', '应用模块', '内部'];

function TabBar() {
    const [active, setActive] = useState('主页');
    return (
        <nav className="flex h-7 shrink-0 items-stretch bg-[#dbdbdb] text-[13px] text-[#222]">
            <button type="button" className="mr-[2px] w-[81px] bg-[#519fb7] text-white">文件(F)</button>
            {tabs.map((tab) => (
                <button
                    key={tab}
                    type="button"
                    onClick={() => setActive(tab)}
                    className={`px-[13px] ${tab === active ? 'border-t border-[#a8a8a8] bg-white text-[#0e5f7e]' : ''}`}
                >
                    {tab}
                </button>
            ))}
            <div className="ml-auto flex items-center pr-0.5">
                <div className="flex h-5 w-[125px] items-center border border-[#a8a8a8] bg-white pr-0.5">
                    <input type="text" aria-label="查找命令" placeholder="查找命令" className="min-w-0 flex-1 pl-px text-[11px] outline-none placeholder:text-[#a0a0a0]" />
                    <Icon name="search" />
                </div>
                <button type="button" aria-label="全屏" className="ml-[7px] flex h-6 w-[26px] items-center justify-center"><Icon name="fit" /></button>
                <button type="button" aria-label="最小化功能区" className="flex h-6 w-[26px] items-center justify-center"><Icon name="up" /></button>
                <button type="button" aria-label="帮助" className="flex h-6 w-[26px] items-center justify-center"><Icon name="help" /></button>
            </div>
        </nav>
    );
}

function Group({ label, width, left = false, children }) {
    return (
        <section className={`flex h-[84px] shrink-0 flex-col border-r border-[#d4d4d4] ${width}`}>
            <div className="flex h-[70px] shrink-0 items-start">{children}</div>
            {label !== undefined && (
                <div className={`flex h-4 shrink-0 items-center text-[11px] leading-4 text-[#0e5f7e] ${left ? 'pr-px' : 'pr-1'}`}>
                    <span className={`min-w-0 flex-1 whitespace-nowrap ${left ? 'pl-px' : 'text-center'}`}>{label}</span>
                    <CaretButton label={`${label} 选项`} className={left ? 'h-4 w-3' : 'h-4 w-4'} />
                </div>
            )}
        </section>
    );
}

function BigButton({ icon, label, width = 'w-11', caret = false, disabled = false }) {
    return (
        <button type="button" disabled={disabled} className={`flex shrink-0 flex-col items-center ${width} ${disabled ? 'text-[#bdbdbd]' : 'text-[#222]'}`}>
            <BigIcon name={icon} />
            <span className="mt-1 text-[11px] leading-4 whitespace-nowrap">{label}</span>
            {caret && <span className="mt-1"><Caret /></span>}
        </button>
    );
}

function MoreButton({ icon }) {
    return (
        <button type="button" className="mr-1 ml-auto flex w-[38px] flex-col items-center text-[11px] text-[#222]">
            <span className="flex h-[34px] w-full items-center justify-center rounded border border-[#d4d4d4]"><Icon name={icon} /></span>
            <span className="mt-0.5 leading-4">更多</span>
            <span className="mt-1"><Caret /></span>
        </button>
    );
}

function SmallList({ items, className = '' }) {
    return (
        <div className={`flex shrink-0 flex-col ${className}`}>
            {items.map(([icon, label, caret]) => (
                <button key={label} type="button" className="flex h-[22px] items-start gap-1 text-[11px] leading-4 whitespace-nowrap text-[#222]">
                    <Icon name={icon} />
                    {label}
                    {caret && <span className="flex h-4 items-center pl-1"><Caret /></span>}
                </button>
            ))}
        </div>
    );
}

// rows of 16px tools, '|' is a separator
function MiniRows({ rows }) {
    return (
        <div className="flex flex-col gap-[6px] pt-1 pl-[3px]">
            {rows.map((row, i) => (
                <div key={i} className="flex h-6 items-center">
                    {row.map((name, j) => name === '|' ? (
                        <Sep key={j} className="mx-0.5 h-[18px]" />
                    ) : (
                        <button key={j} type="button" aria-label={name} className="flex h-6 w-[23px] shrink-0 items-center justify-center">
                            <Icon name={name} />
                        </button>
                    ))}
                </div>
            ))}
        </div>
    );
}

function Ribbon() {
    return (
        <div className="flex h-[94px] shrink-0 items-start overflow-hidden border-b border-[#d4d4d4] bg-white pt-[5px]">
            <Group label="直接草图" width="w-[178px]">
                <BigButton icon="sketch" label="草图" width="ml-1 w-[50px]" />
                <div className="ml-[3px] grid h-[66px] w-[99px] grid-cols-3 grid-rows-2 place-items-center border border-[#d4d4d4]">
                    {['profile', 'rect', 'line', 'arc', 'circle', 'plus'].map((name) => (
                        <button key={name} type="button" aria-label={name}><BigIcon name={name} className="size-[22px]" /></button>
                    ))}
                </div>
                <div className="flex h-[66px] w-4 flex-col items-center justify-between py-2">
                    <button type="button" aria-label="上一行" className="opacity-40"><svg viewBox="0 0 6 3" className="h-[3px] w-1.5"><path d="M0 3H6L3 0Z" /></svg></button>
                    <CaretButton className="h-2 w-4" label="下一行" />
                    <button type="button" aria-label="展开" className="flex flex-col items-center gap-0.5"><span className="h-px w-[7px] bg-black" /><Caret /></button>
                </div>
            </Group>
            <Group label="特征" width="w-[369px]">
                <BigButton icon="datum" label="基准平面" width="ml-2 w-[52px]" caret />
                <BigButton icon="extrude" label="拉伸" width="w-10" caret />
                <BigButton icon="hole" label="孔" width="w-10" />
                <SmallList className="ml-[7px]" items={[['pattern', '阵列特征'], ['unite', '合并', true], ['shell', '抽壳']]} />
                <BigButton icon="blend" label="边倒圆" width="ml-2 w-[34px]" caret />
                <SmallList className="ml-2" items={[['chamfer', '倒斜角'], ['trim', '修剪体'], ['draft', '拔模']]} />
                <MoreButton icon="moreFeature" />
            </Group>
            <Group label="同步建模" width="w-[172px]">
                <BigButton icon="moveFace" label="移动面" width="ml-2 w-10" />
                <SmallList className="ml-[6px]" items={[['offset', '偏置区域'], ['replace', '替换面'], ['remove', '删除面']]} />
                <MoreButton icon="moreSync" />
            </Group>
            <Group label="标准化工具 - G..." width="w-[104px]" left>
                <MiniRows rows={[['stdBoxes', 'layers', 'layersDoc', '|', 'tag'], ['blueCheck', 'toolCheck', 'goldCheck', '|', 'cubePen']]} />
            </Group>
            <Group label="齿轮..." width="w-[52px]" left>
                <MiniRows rows={[['gear1', 'gear2'], ['gearHand']]} />
            </Group>
            <Group label="弹簧..." width="w-[58px]" left>
                <MiniRows rows={[['spring', 'spring2'], ['disc', '|', 'springCut']]} />
            </Group>
            <Group label="加工..." width="w-[52px]" left>
                <MiniRows rows={[['machCheck', 'machDoc'], ['machTable', 'axes']]} />
            </Group>
            <Group label="建模工具 - G..." width="w-[98px]" left>
                <MiniRows rows={[['triangle', 'table', 'folderPlus', 'folderGear'], ['note', 'brushDim', '|', 'binoc']]} />
            </Group>
            <Group label="?.." width="w-[29px]" left>
                <MiniRows rows={[['blocks'], ['blocks']]} />
            </Group>
            <Group label="尺寸快速格式化工具 - GC工具箱" width="w-[288px]">
                <MiniRows
                    rows={[
                        ['dimBox', '|', 'x', 'tolA', 'tolB', 'tolC', 'tolD', 'boxX', 'parX', 'h7', 'h7a', 'h7b', 'h7c'],
                        ['leader', 'leaderR', '|', 'dia1', 'dia2', 'enter'],
                    ]}
                />
            </Group>
            <Group width="w-[43px]">
                <BigButton icon="surface" label="曲面" width="w-[42px]" caret />
            </Group>
            <Group label="装配" width="w-[181px]">
                <BigButton icon="process" label="处理装配" width="ml-2 w-[52px]" disabled />
                <BigButton icon="add" label="添加" width="w-10" caret />
                <SmallList className="ml-[5px]" items={[['constraint', '装配约束'], ['moveComp', '移动组件'], ['patternComp', '阵列组件']]} />
            </Group>
            <div className="ml-auto flex h-[86px] items-end"><CaretButton label="功能区选项" /></div>
        </div>
    );
}

function Filter({ label, options, width }) {
    return (
        <div className={`relative h-5 shrink-0 ${width}`}>
            <select aria-label={label} className="h-5 w-full appearance-none border border-[#a0a0a0] bg-white pl-0.5 text-[11px] text-[#222] outline-none">
                {options.map((o) => <option key={o}>{o}</option>)}
            </select>
            <span className="pointer-events-none absolute inset-y-0 right-1 flex items-center"><Caret className="h-1 w-2" /></span>
        </div>
    );
}

// '*' marks a snap option that is switched on
const snapTools = ['hlShape*', 'hlCube*', 'hlGear*', 'endpoint*', 'midpoint*', 'ctrl', 'poles*', 'spline*', 'cross', 'center', 'point*', 'onCurve*', 'face', 'mesh', 'grid'];

function SelectionBar() {
    const tool = (name) => (
        <button key={name} type="button" aria-label={name} className="flex h-[22px] w-6 shrink-0 items-center justify-center"><Icon name={name} /></button>
    );
    return (
        <div className="flex h-8 shrink-0 items-center border-b border-[#8a9a98] bg-white pl-2 text-[11px] text-[#222]">
            <button type="button" className="flex h-6 w-[78px] items-center gap-1 pl-0.5">
                <Icon name="menu" />
                <span>菜单(<u>M</u>)</span>
                <Caret />
            </button>
            <Sep className="mr-3 h-6" />
            <Filter label="选择过滤器" options={['无选择过滤器', '面', '边', '体']} width="w-[133px]" />
            <div className="w-2" />
            <Filter label="选择范围" options={['整个装配', '仅在工作部件内']} width="w-[140px]" />
            <div className="w-1.5" />
            {['grayMove', 'grayFilter', 'snapBox'].map(tool)}
            <CaretButton className="mr-px h-4 w-2" />
            {['grayA', 'grayB', 'cubeTarget'].map(tool)}
            <div className="ml-1 flex">{tool('marquee')}</div>
            <CaretButton className="mr-1 h-4 w-2.5" />
            <div className="flex gap-px">
                {snapTools.map((item) => {
                    const on = item.endsWith('*');
                    const name = item.replace('*', '');
                    return (
                        <button
                            key={name}
                            type="button"
                            aria-label={name}
                            aria-pressed={on}
                            className={`flex h-[22px] w-6 items-center justify-center ${on ? 'border border-[#b4d8e0] bg-[#cfe6ec]' : ''}`}
                        >
                            <Icon name={name} />
                        </button>
                    );
                })}
            </div>
            <Sep className="mr-[6px] ml-2 h-6" />
            <div className="flex gap-px">{['zoomFit', 'pan', 'rotate', 'persp', 'grayDoc'].map(tool)}</div>
            {['layout', 'shade', 'blueCube', 'clip'].map((name) => (
                <div key={name} className="flex items-center pl-1">
                    {tool(name)}
                    <CaretButton className="h-4 w-[9px]" />
                </div>
            ))}
            <Sep className="ml-2.5 h-6" />
            <div className="ml-auto flex h-7 items-end"><CaretButton label="选择条选项" /></div>
        </div>
    );
}

const resources = [
    ['assembly', '装配导航器', 'mt-4'],
    ['constraints', '约束导航器', ''],
    ['navigator', '部件导航器', ''],
    ['books', '重用库', ''],
    ['info', 'HD3D 工具', 'mt-3'],
    ['globeDoc', 'Web 浏览器', 'mt-3'],
    ['clock', '历史记录', 'mt-3'],
    ['rainbow', '可视化', ''],
    ['wand', '加工向导', ''],
    ['hammer', '角色', ''],
];

function ResourceBar() {
    const [open, setOpen] = useState('navigator');
    return (
        <aside className="flex w-8 shrink-0 flex-col bg-[#dcdcdc] shadow-[inset_-1px_0_0_#a0a0a0]">
            <button type="button" aria-label="资源条选项" className="flex h-[26px] w-[30px] items-center justify-center"><BigIcon name="gear" className="size-[14px]" /></button>
            {resources.map(([name, label, gap]) => (
                <button
                    key={name}
                    type="button"
                    aria-label={label}
                    onClick={() => setOpen(name)}
                    className={`ml-0.5 flex h-[42px] items-center justify-center ${gap} ${name === open ? 'border border-r-0 border-[#a0a0a0] bg-white' : ''}`}
                >
                    <BigIcon name={name} className="size-[22px]" />
                </button>
            ))}
        </aside>
    );
}

function Expander({ open }) {
    return (
        <span className="relative z-10 flex size-[9px] shrink-0 items-center justify-center border border-[#c8c8c8] bg-white">
            <svg viewBox="0 0 5 5" className="size-[5px]" stroke="#000"><path d={open ? 'M0 2.5H5' : 'M0 2.5H5M2.5 0V5'} /></svg>
        </span>
    );
}

function Tick() {
    return <svg viewBox="0 0 17 17" className="size-3 shrink-0" aria-hidden="true">{tick}</svg>;
}

const features = [
    { id: 1, name: '体 (1)', icon: 'body', dim: true },
    { id: 2, name: '抽取面 (2)', icon: 'extract' },
    { id: 3, name: '抽取面 (3)', icon: 'extract' },
    { id: 4, name: '抽取面 (4)', icon: 'extract' },
    { id: 5, name: '抽取面 (5)', icon: 'extract' },
    { id: 6, name: '抽取面 (6)', icon: 'extract' },
    { id: 7, name: '抽取面 (7)', icon: 'extract', bold: true },
];

function FeatureRow({ feature, shown, onToggle }) {
    const last = feature.id === features.length;
    return (
        <label className="flex h-[19px] items-center pl-7">
            <span className={`w-px self-start border-l border-dotted border-[#999] ${last ? 'h-[10px]' : 'h-5'}`} />
            <span className="mr-[3px] w-2 border-t border-dotted border-[#999]" />
            <span className="relative mr-0.5 size-3 shrink-0">
                <input type="checkbox" checked={shown} onChange={onToggle} className="block size-3 appearance-none border border-black bg-white" />
                {shown && <span className="pointer-events-none absolute inset-0"><Tick /></span>}
            </span>
            <Icon name={feature.icon} />
            <span className={`pl-[3px] ${feature.dim ? 'text-[#a8a8a8]' : ''} ${feature.bold ? 'font-bold' : ''}`}>{feature.name}</span>
        </label>
    );
}

function Navigator() {
    const [shown, setShown] = useState(features.map((f) => f.id));
    const toggle = (id) => setShown(shown.includes(id) ? shown.filter((s) => s !== id) : [...shown, id]);

    const rows = [
        <div className="flex h-[19px] items-center pl-[5px]">
            <Expander />
            <span className="mr-px w-[3px] border-t border-dotted border-[#999]" />
            <Icon name="views" />
            <span className="pl-[4px]">模型视图</span>
        </div>,
        <div className="flex h-[19px] items-center pl-[5px]">
            <Expander />
            <span className="mr-1 w-[3px] border-t border-dotted border-[#999]" />
            <Tick />
            <span className="pl-[3px]"><Icon name="camera" /></span>
            <span className="pl-[2px]">摄像机</span>
        </div>,
        <div className="flex h-[19px] items-center pl-[5px]">
            <Expander open />
            <span className="mr-px w-[3px] border-t border-dotted border-[#999]" />
            <Icon name="openFolder" />
            <span className="pl-[4px]">模型历史记录</span>
        </div>,
        ...features.map((f) => <FeatureRow feature={f} shown={shown.includes(f.id)} onToggle={() => toggle(f.id)} />),
    ];

    return (
        <aside className="flex w-[332px] shrink-0 flex-col border-r border-[#888] bg-white pr-[9px] pl-[6px]">
            <div className="flex h-7 shrink-0 items-center justify-between pt-px pr-[7px] pl-1 text-[12px] text-[#222]">
                <h2>部件导航器</h2>
                <button type="button" aria-label="最大化" className="h-[11px] w-[13px] border border-t-2 border-black" />
            </div>
            <div className="flex min-h-0 flex-1 flex-col border-2 border-[#d8d8d8] border-b-[#c0c0c0]">
                <div className="relative min-h-0 flex-1 overflow-hidden">
                    <table className="w-full table-fixed border-collapse text-[12px] leading-[19px] text-[#222]">
                        <colgroup>
                            <col className="w-[199px]" />
                            <col className="w-[100px]" />
                            <col />
                        </colgroup>
                        <thead>
                            <tr className="h-5 border-b border-[#d0d0d0] bg-[#f0f0f0] text-left">
                                <th className="border-r border-[#d0d0d0] py-0 pl-1.5 font-normal">
                                    <span className="flex items-center gap-4">名称<svg viewBox="0 0 10 5" className="h-[5px] w-2.5"><path d="M0 5H10L5 0Z" /></svg></span>
                                </th>
                                <th className="border-r border-[#d0d0d0] py-0 pl-1.5 font-normal">最新</th>
                                <th className="overflow-hidden py-0 pl-1.5 font-normal whitespace-nowrap">附注</th>
                            </tr>
                        </thead>
                        <tbody>
                            {Array.from({ length: 60 }, (_, i) => (
                                <tr key={i} className="h-5 border-b border-[#e6e6e6] even:bg-[#fafafa]">
                                    <td className="border-r border-[#e6e6e6] p-0">{rows[i]}</td>
                                    <td className="border-r border-[#e6e6e6] py-0 pl-1.5">{i > 2 && i < rows.length && <Tick />}</td>
                                    <td className="p-0" />
                                </tr>
                            ))}
                        </tbody>
                    </table>
                    {/* focus rectangle of the current row */}
                    <div className="pointer-events-none absolute top-5 right-0 left-[35px] h-5 border border-r-0 border-dotted border-black" />
                    {/* branch line between the root expanders */}
                    <div className="pointer-events-none absolute top-9 left-[9px] h-10 border-l border-dotted border-[#999]" />
                </div>
                <div className="flex h-[17px] shrink-0 items-center bg-[#f0f0f0]">
                    <button type="button" aria-label="向左滚动" className="flex h-4 w-[17px] items-center justify-center"><svg viewBox="0 0 6 8" className="h-2 w-1.5" fill="none" stroke="#444" strokeWidth="1.6"><path d="M5 0.5L1 4L5 7.5" /></svg></button>
                    <div className="flex-1"><div className="h-[15px] w-[78%] bg-[#cdcdcd]" /></div>
                    <button type="button" aria-label="向右滚动" className="flex h-4 w-[17px] items-center justify-center"><svg viewBox="0 0 6 8" className="h-2 w-1.5" fill="none" stroke="#444" strokeWidth="1.6"><path d="M1 0.5L5 4L1 7.5" /></svg></button>
                </div>
            </div>
            <div className="h-[5px] shrink-0 border border-[#a8a8a8] bg-[#dcdcdc]" />
            <div className="mb-1.5 shrink-0">
                {['相关性', '细节', '预览'].map((name) => (
                    <button key={name} type="button" className="flex h-6 w-full items-center justify-between border-b-2 border-[#d0d0d0] pt-0.5 pr-1.5 pl-[7px] text-[14px] leading-5 text-[#0e5f7e]">
                        {name}
                        <svg viewBox="0 0 11 9" className="h-[9px] w-[11px]" fill="#0e5f7e"><path d="M0 0H3L5.5 5.5L8 0H11L6.5 8.5H4.5Z" /></svg>
                    </button>
                ))}
            </div>
        </aside>
    );
}

// top row first: centre and radii of each drilled hole
const holes = [
    [415, 246, 19, 17], [671, 243, 19, 17],
    [441, 443, 19, 17], [697, 440, 19, 17],
    [470, 633, 20, 14], [726, 630, 20, 14],
    [497, 822, 20, 14], [753, 818, 20, 14],
];

function Part() {
    return (
        <svg viewBox="0 0 900 960" className="absolute top-[197px] left-[776px] h-[320px] w-[300px]" fill="none" stroke="#222" strokeWidth="2.8" strokeLinejoin="round">
            <path fill="#fff" d="M218 58L724 52C728 70 726 88 729 103C735 190 742 250 751 310C762 390 772 480 784 570C800 660 812 760 825 830C832 856 844 880 849 909L356 916C256 914 196 838 188 740C183 690 182 660 175 620C165 560 145 520 142 470C139 430 138 380 133 340C122 290 119 240 119 180L117 120C124 84 164 60 218 58Z" />
            <path d="M218 58C220 76 219 92 222 108C230 220 268 240 276 330C280 380 280 390 286 410C314 510 318 530 319 600C317 670 320 680 326 710C344 790 350 830 350 874C352 890 356 900 358 916" />
            <path d="M729 103L218 108C188 110 174 126 172 148L196 290L218 450L245 640L274 820C282 856 306 872 346 874L838 868" />
            {holes.map(([cx, cy, rx, ry]) => (
                <ellipse key={`${cx}-${cy}`} cx={cx} cy={cy} rx={rx} ry={ry} fill="#d0d1d3" stroke="#444" />
            ))}
        </svg>
    );
}

function Wcs() {
    return (
        <svg viewBox="90 60 240 195" className="absolute top-[517px] left-[566px] h-[65px] w-20 font-['Liberation_Sans',sans-serif]" fontSize="41">
            <path d="M120 114L132 135L138 228L130 200L115 140Z" fill="#2f9c38" />
            <path d="M156 128L160 152L140 228L137 224L144 150Z" fill="#0a2490" />
            <path d="M150 236L265 226L304 234L262 242Z" fill="#c83030" />
            <text x="130" y="103" fill="#3a9040">YC</text>
            <text x="103" y="122" fill="#2850d8">ZC</text>
            <text x="262" y="220" fill="#c83030">XC</text>
        </svg>
    );
}

function ViewTriad() {
    return (
        <svg viewBox="1250 75 210 160" className="absolute bottom-[60px] left-[53px] h-[53px] w-[70px] font-['Liberation_Sans',sans-serif]" fontSize="34">
            <path d="M1288 100H1367L1376 158L1366 208H1296L1282 152Z" fill="#d2d3d5" stroke="#a0a0a4" strokeWidth="2.5" />
            <path d="M1282 152H1358L1376 158H1290M1367 100L1358 152L1366 208" fill="none" stroke="#a8a8ac" strokeWidth="2.5" />
            <path d="M1274 108L1282 134L1278 136L1290 205L1284 206L1274 136L1268 134Z" fill="#38a040" />
            <path d="M1301 124L1309 150L1303 150L1294 206H1287L1297 150L1292 149Z" fill="#0a2490" />
            <path d="M1296 209H1386V203L1418 209L1386 217V213H1296Z" fill="#c83030" />
            <circle cx="1288" cy="212" r="11" fill="#a8a8a8" />
            <circle cx="1285" cy="208" r="5" fill="#eee" />
            <text x="1261" y="106" fill="#3a9040">Y</text>
            <text x="1295" y="125" fill="#2850d8">Z</text>
            <text x="1424" y="220" fill="#c83030">X</text>
        </svg>
    );
}

function Viewport() {
    return (
        <main className="flex min-w-0 flex-1 flex-col">
            <div className="flex h-[23px] shrink-0 border-b-2 border-[#519fb7] bg-white">
                <div className="flex items-center bg-[#519fb7] px-1.5 text-[12px] text-white">
                    <Icon name="part" />
                    <span className="pl-1">Metrologic_TrainingPart_catpart 2021_stp.prt</span>
                    <svg viewBox="0 0 12 12" className="ml-1.5 size-3" fill="none" stroke="#fff" strokeWidth="1.5"><path d="M7 1H1.5V11H8.5V8M4 1V3H8M7 7L11 4L8 1" /></svg>
                    <button type="button" aria-label="关闭选项卡" className="ml-1.5"><svg viewBox="0 0 10 10" className="size-[9px]" stroke="#fff" strokeWidth="2.2"><path d="M1 1L9 9M9 1L1 9" /></svg></button>
                </div>
            </div>
            <div className="relative min-h-0 flex-1 overflow-hidden bg-linear-to-b from-[#b4b5b7] via-[#e4e5e7] via-75% to-[#e7e8ea]">
                <Part />
                <Wcs />
                <ViewTriad />
            </div>
        </main>
    );
}

function ImeBar() {
    const btn = 'flex h-6 w-6 items-center justify-center';
    return (
        <div className="absolute right-[561px] bottom-[11px] flex h-[25px] items-center border border-[#b8cce0] bg-white pl-5">
            <svg viewBox="0 0 32 32" className="absolute -top-[5px] -left-[12px] size-8">
                <path d="M1 8Q0 6 3 5L24 1Q26 0 27 3L32 22Q33 25 30 26L10 31Q7 32 6 29Z" fill="#ee5a24" />
                <path d="M25 9C17 7 8 9 8 13C8 18 25 14 25 19C25 24 16 25 8 23" fill="none" stroke="#fff" strokeWidth="4.2" />
            </svg>
            <button type="button" className="flex h-6 w-6 items-center justify-center text-[15px] leading-5 font-bold text-[#0f6cc8]">中</button>
            <button type="button" aria-label="标点" className={btn}><svg viewBox="0 0 16 16" className="size-4" fill="#0f6cc8"><circle cx="5" cy="5" r="1.8" fill="none" stroke="#0f6cc8" strokeWidth="1.4" /><path d="M10 8H14V10Q14 13 11 14V12H10Z" /></svg></button>
            <button type="button" aria-label="语音" className={btn}><svg viewBox="0 0 16 16" className="size-4" fill="#0f6cc8"><rect x="5" y="0" width="6" height="9" rx="3" /><path d="M3 7Q3 11 8 11Q13 11 13 7" fill="none" stroke="#0f6cc8" strokeWidth="1.6" /><path d="M7 11H9V14H11V16H5V14H7Z" /></svg></button>
            <button type="button" aria-label="键盘" className={btn}><svg viewBox="0 0 16 16" className="size-4" fill="none" stroke="#0f6cc8" strokeWidth="1.6"><rect x="1" y="2.5" width="14" height="11" rx="1" /><path d="M3 6H13M3 9H13" strokeDasharray="2 1.3" /><path d="M4 11.5H12" /></svg></button>
            <button type="button" aria-label="皮肤" className={btn}><svg viewBox="0 0 16 16" className="size-4" fill="#0f6cc8"><path d="M5 2Q8 4 11 2L16 4L15 8H13V15H3V8H1L0 4Z" /></svg></button>
            <button type="button" aria-label="工具箱" className="flex h-[23px] w-6 items-center justify-center bg-linear-to-r from-[#dff4fa] to-[#f8eef8]"><svg viewBox="0 0 16 16" className="size-[14px]"><rect width="7" height="7" rx="2" fill="#6c6ce0" /><rect x="10" y="1" width="5" height="5" rx="1" fill="none" stroke="#6c6ce0" strokeWidth="2" /><rect y="9" width="7" height="7" rx="2" fill="#a878b0" /><rect x="9" y="9" width="7" height="7" rx="2" fill="#6c6ce0" /></svg></button>
        </div>
    );
}

export default function App() {
    return (
        <div className="relative flex h-screen w-full flex-col overflow-hidden bg-white font-['Noto_Sans','Noto_Sans_CJK_SC',sans-serif]">
            {/* gradients shared by the icons */}
            <svg className="absolute size-0" aria-hidden="true">
                <defs>
                    <linearGradient id="datumG" x1="0" y1="0" x2="1" y2="1"><stop offset="0" stopColor="#dde4e4" /><stop offset="0.6" stopColor="#eef4ee" /><stop offset="1" stopColor="#c4e0c8" /></linearGradient>
                    <linearGradient id="rainbowG" x1="0" y1="0" x2="0" y2="1"><stop offset="0" stopColor="#e82010" /><stop offset="0.25" stopColor="#f8f010" /><stop offset="0.5" stopColor="#20e030" /><stop offset="0.75" stopColor="#10d0f0" /><stop offset="1" stopColor="#1010e8" /></linearGradient>
                </defs>
            </svg>
            <TitleBar />
            <TabBar />
            <Ribbon />
            <SelectionBar />
            <div className="flex min-h-0 flex-1">
                <ResourceBar />
                <Navigator />
                <Viewport />
            </div>
            <footer className="flex h-[23px] shrink-0 items-center justify-between border-t border-b border-t-[#a0a0a0] border-b-[#111] bg-white pr-[54px] pl-[3px] text-[11px] font-bold text-[#222]">
                <span>选择对象并使用 MB3，或者双击某一对象</span>
                <span className="flex gap-1"><Icon name="flag" /><Icon name="fit" /></span>
            </footer>
            <ImeBar />
        </div>
    );
}
